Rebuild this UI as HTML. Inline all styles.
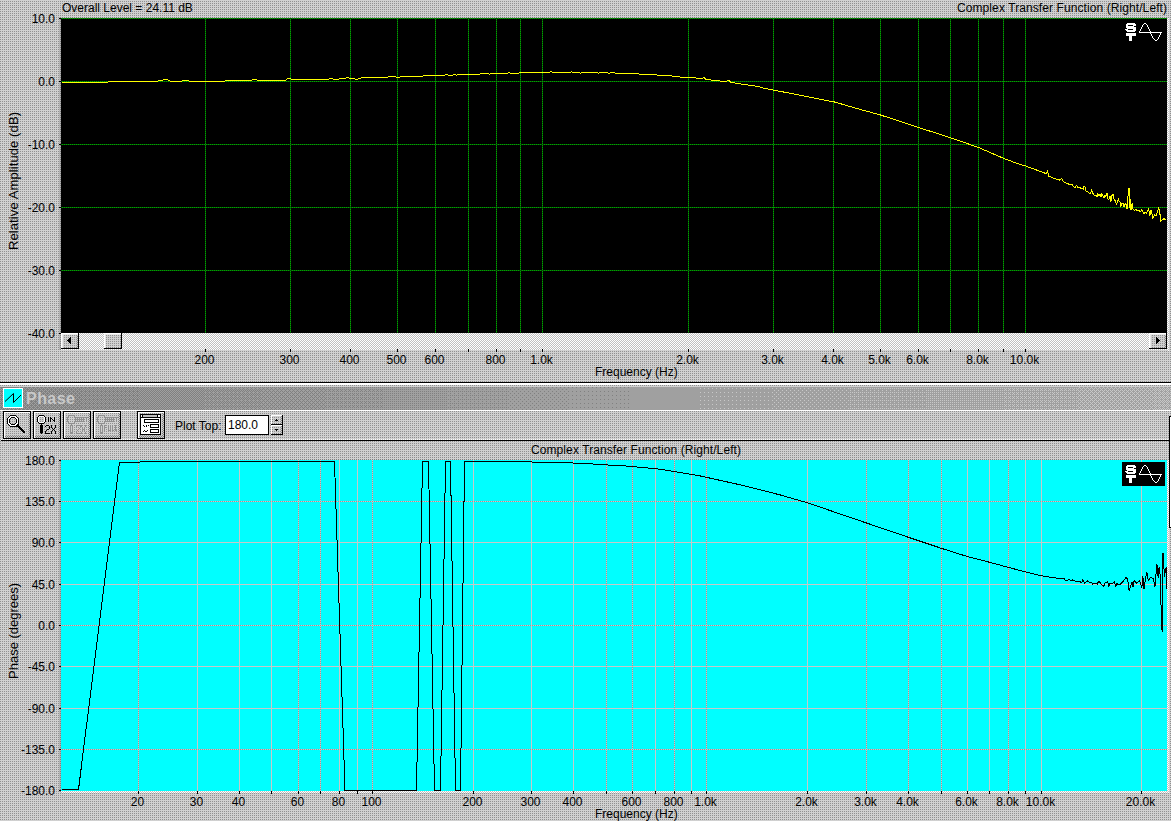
<!DOCTYPE html>
<html><head><meta charset="utf-8"><style>
html,body{margin:0;padding:0;width:1171px;height:821px;overflow:hidden;background:#d0d0d0;}
svg{display:block;}
text{font-family:"Liberation Sans",sans-serif;font-size:12px;fill:#000;}
</style></head><body>
<svg width="1171" height="821" viewBox="0 0 1171 821" shape-rendering="crispEdges">
<defs>
<pattern id="bg" patternUnits="userSpaceOnUse" width="2" height="2"><rect width="2" height="2" fill="#d0d0d0"/><rect x="0" y="1" width="1" height="1" fill="#909090"/></pattern>
<pattern id="chk" patternUnits="userSpaceOnUse" width="2" height="2"><rect width="2" height="2" fill="#ffffff"/><rect x="1" y="0" width="1" height="1" fill="#c0c0c0"/><rect x="0" y="1" width="1" height="1" fill="#c0c0c0"/></pattern>
<pattern id="strip" patternUnits="userSpaceOnUse" width="2" height="2"><rect width="2" height="2" fill="#b4b4b4"/><rect x="0" y="1" width="1" height="1" fill="#808080"/></pattern>
<pattern id="dk" patternUnits="userSpaceOnUse" width="2" height="2"><rect width="2" height="2" fill="#d0d0d0"/><rect x="0" y="1" width="1" height="1" fill="#808080"/><rect x="1" y="0" width="1" height="1" fill="#808080"/></pattern>
<linearGradient id="tg" x1="0" y1="0" x2="1" y2="0"><stop offset="0" stop-color="#8a8a8a"/><stop offset="1" stop-color="#b1b1b1"/></linearGradient>
</defs>
<rect width="1171" height="821" fill="url(#bg)"/>

<rect x="59" y="17" width="1108" height="1" fill="url(#dk)"/>
<rect x="59" y="17" width="2" height="333" fill="url(#strip)"/>
<rect x="1167" y="18" width="2" height="333" fill="url(#chk)"/>
<rect x="61" y="18" width="1106" height="315" fill="#000"/>
<rect x="61" y="18" width="1106" height="1" fill="#005800"/>
<line x1="61" y1="18.5" x2="1167" y2="18.5" stroke="#00a000" stroke-width="1" stroke-dasharray="1 1" stroke-dashoffset="1"/>
<rect x="61" y="81" width="1106" height="1" fill="#005800"/>
<line x1="61" y1="81.5" x2="1167" y2="81.5" stroke="#00a000" stroke-width="1" stroke-dasharray="1 1" stroke-dashoffset="1"/>
<rect x="61" y="144" width="1106" height="1" fill="#005800"/>
<line x1="61" y1="144.5" x2="1167" y2="144.5" stroke="#00a000" stroke-width="1" stroke-dasharray="1 1" stroke-dashoffset="1"/>
<rect x="61" y="207" width="1106" height="1" fill="#005800"/>
<line x1="61" y1="207.5" x2="1167" y2="207.5" stroke="#00a000" stroke-width="1" stroke-dasharray="1 1" stroke-dashoffset="1"/>
<rect x="61" y="270" width="1106" height="1" fill="#005800"/>
<line x1="61" y1="270.5" x2="1167" y2="270.5" stroke="#00a000" stroke-width="1" stroke-dasharray="1 1" stroke-dashoffset="1"/>
<rect x="205" y="18" width="1" height="315" fill="#005800"/>
<line x1="205.5" y1="18" x2="205.5" y2="333" stroke="#00a000" stroke-width="1" stroke-dasharray="1 1" stroke-dashoffset="1"/>
<rect x="290" y="18" width="1" height="315" fill="#005800"/>
<line x1="290.5" y1="18" x2="290.5" y2="333" stroke="#00a000" stroke-width="1" stroke-dasharray="1 1" stroke-dashoffset="1"/>
<rect x="350" y="18" width="1" height="315" fill="#005800"/>
<line x1="350.5" y1="18" x2="350.5" y2="333" stroke="#00a000" stroke-width="1" stroke-dasharray="1 1" stroke-dashoffset="1"/>
<rect x="397" y="18" width="1" height="315" fill="#005800"/>
<line x1="397.5" y1="18" x2="397.5" y2="333" stroke="#00a000" stroke-width="1" stroke-dasharray="1 1" stroke-dashoffset="1"/>
<rect x="435" y="18" width="1" height="315" fill="#005800"/>
<line x1="435.5" y1="18" x2="435.5" y2="333" stroke="#00a000" stroke-width="1" stroke-dasharray="1 1" stroke-dashoffset="1"/>
<rect x="468" y="18" width="1" height="315" fill="#005800"/>
<line x1="468.5" y1="18" x2="468.5" y2="333" stroke="#00a000" stroke-width="1" stroke-dasharray="1 1" stroke-dashoffset="1"/>
<rect x="496" y="18" width="1" height="315" fill="#005800"/>
<line x1="496.5" y1="18" x2="496.5" y2="333" stroke="#00a000" stroke-width="1" stroke-dasharray="1 1" stroke-dashoffset="1"/>
<rect x="520" y="18" width="1" height="315" fill="#005800"/>
<line x1="520.5" y1="18" x2="520.5" y2="333" stroke="#00a000" stroke-width="1" stroke-dasharray="1 1" stroke-dashoffset="1"/>
<rect x="542" y="18" width="1" height="315" fill="#005800"/>
<line x1="542.5" y1="18" x2="542.5" y2="333" stroke="#00a000" stroke-width="1" stroke-dasharray="1 1" stroke-dashoffset="1"/>
<rect x="688" y="18" width="1" height="315" fill="#005800"/>
<line x1="688.5" y1="18" x2="688.5" y2="333" stroke="#00a000" stroke-width="1" stroke-dasharray="1 1" stroke-dashoffset="1"/>
<rect x="773" y="18" width="1" height="315" fill="#005800"/>
<line x1="773.5" y1="18" x2="773.5" y2="333" stroke="#00a000" stroke-width="1" stroke-dasharray="1 1" stroke-dashoffset="1"/>
<rect x="833" y="18" width="1" height="315" fill="#005800"/>
<line x1="833.5" y1="18" x2="833.5" y2="333" stroke="#00a000" stroke-width="1" stroke-dasharray="1 1" stroke-dashoffset="1"/>
<rect x="880" y="18" width="1" height="315" fill="#005800"/>
<line x1="880.5" y1="18" x2="880.5" y2="333" stroke="#00a000" stroke-width="1" stroke-dasharray="1 1" stroke-dashoffset="1"/>
<rect x="918" y="18" width="1" height="315" fill="#005800"/>
<line x1="918.5" y1="18" x2="918.5" y2="333" stroke="#00a000" stroke-width="1" stroke-dasharray="1 1" stroke-dashoffset="1"/>
<rect x="950" y="18" width="1" height="315" fill="#005800"/>
<line x1="950.5" y1="18" x2="950.5" y2="333" stroke="#00a000" stroke-width="1" stroke-dasharray="1 1" stroke-dashoffset="1"/>
<rect x="978" y="18" width="1" height="315" fill="#005800"/>
<line x1="978.5" y1="18" x2="978.5" y2="333" stroke="#00a000" stroke-width="1" stroke-dasharray="1 1" stroke-dashoffset="1"/>
<rect x="1003" y="18" width="1" height="315" fill="#005800"/>
<line x1="1003.5" y1="18" x2="1003.5" y2="333" stroke="#00a000" stroke-width="1" stroke-dasharray="1 1" stroke-dashoffset="1"/>
<rect x="1025" y="18" width="1" height="315" fill="#005800"/>
<line x1="1025.5" y1="18" x2="1025.5" y2="333" stroke="#00a000" stroke-width="1" stroke-dasharray="1 1" stroke-dashoffset="1"/>
<rect x="59" y="18" width="2" height="1" fill="#000"/>
<text x="55" y="23" text-anchor="end">10.0</text>
<rect x="59" y="81" width="2" height="1" fill="#000"/>
<text x="55" y="86" text-anchor="end">0.0</text>
<rect x="59" y="144" width="2" height="1" fill="#000"/>
<text x="55" y="149" text-anchor="end">-10.0</text>
<rect x="59" y="207" width="2" height="1" fill="#000"/>
<text x="55" y="212" text-anchor="end">-20.0</text>
<rect x="59" y="270" width="2" height="1" fill="#000"/>
<text x="55" y="275" text-anchor="end">-30.0</text>
<rect x="59" y="333" width="2" height="1" fill="#000"/>
<text x="55" y="338" text-anchor="end">-40.0</text>
<polyline fill="none" stroke="#ffff00" stroke-width="1" shape-rendering="crispEdges" points="61.50,82.50 107.50,82.50 108.50,81.50 157.50,81.50 158.50,80.50 162.50,80.50 163.50,79.50 167.50,79.50 168.50,80.50 169.50,80.50 170.50,81.50 181.50,81.50 182.50,80.50 188.50,80.50 189.50,81.50 224.50,81.50 225.50,80.50 251.50,80.50 252.50,79.50 256.50,79.50 257.50,80.50 285.50,80.50 286.50,79.50 286.50,79.50 287.50,78.50 290.50,78.50 291.50,79.50 328.50,79.50 329.50,78.50 332.50,78.50 333.50,79.50 338.50,79.50 339.50,78.50 345.50,78.50 346.50,77.50 348.50,77.50 349.50,78.50 354.50,78.50 355.50,79.50 357.50,79.50 358.50,78.50 360.50,78.50 361.50,77.50 387.50,77.50 388.50,76.50 395.50,76.50 396.50,77.50 399.50,77.50 400.50,76.50 422.50,76.50 423.50,75.50 444.50,75.50 445.50,74.50 447.50,74.50 448.50,75.50 452.50,75.50 453.50,74.50 455.50,74.50 456.50,75.50 456.50,75.50 457.50,74.50 479.50,74.50 480.50,73.50 488.50,73.50 489.50,74.50 489.50,74.50 490.50,73.50 507.50,73.50 508.50,72.50 509.50,72.50 510.50,73.50 518.50,73.50 519.50,72.50 549.50,72.50 550.50,71.50 551.50,71.50 552.50,72.50 570.50,72.50 571.50,71.50 571.50,71.50 572.50,72.50 579.50,72.50 580.50,73.50 580.50,73.50 581.50,72.50 597.50,72.50 598.50,73.50 598.50,73.50 599.50,72.50 607.50,72.50 608.50,73.50 609.50,73.50 610.50,72.50 614.50,72.50 615.50,73.50 638.50,73.50 639.50,74.50 656.50,74.50 657.50,75.50 671.50,75.50 672.50,76.50 679.50,76.50 680.50,77.50 682.50,77.50 683.50,77.50 695.50,77.50 696.50,78.50 702.50,78.50 703.50,77.50 704.50,77.50 705.50,79.50 710.50,79.50 711.50,80.50 719.50,80.50 720.50,81.50 726.50,81.50 727.50,80.50 729.50,80.50 730.50,82.50 734.50,82.50 735.50,83.50 740.50,83.50 741.50,84.50 747.50,84.50 748.50,85.50 754.50,85.50 755.50,86.50 759.50,86.50 760.50,87.50 834.50,102.00 860.50,109.50 880.50,115.00 918.50,127.50 950.50,137.70 978.50,147.50 1004.00,158.50 1020.50,164.70 1025.70,166.00 1046.30,173.70 1047.50,171.10 1048.90,176.30 1059.20,180.20 1061.80,178.20 1063.10,181.50 1070.50,184.90 1072.20,184.90 1074.80,187.90 1076.10,185.80 1076.90,186.00 1077.80,187.90 1080.30,187.90 1081.00,189.20 1082.00,187.70 1083.10,189.20 1083.70,186.80 1085.00,186.80 1085.70,190.50 1086.30,191.70 1088.00,191.70 1089.90,194.10 1091.00,192.20 1091.80,190.00 1092.70,193.20 1094.40,195.60 1096.50,195.80 1097.00,197.30 1097.80,193.90 1098.90,196.00 1100.00,193.90 1101.00,197.30 1101.90,193.90 1104.00,198.10 1104.90,195.20 1105.90,196.40 1107.00,192.80 1108.10,199.00 1108.90,199.80 1110.00,195.80 1110.90,202.00 1111.90,195.60 1113.00,193.90 1114.10,199.80 1114.90,200.30 1116.60,204.10 1117.70,201.10 1118.50,197.60 1119.00,201.00 1120.00,202.00 1120.90,206.10 1121.90,203.00 1123.10,203.00 1124.10,206.90 1125.10,203.70 1126.10,204.40 1127.00,209.10 1128.00,195.70 1129.00,187.60 1129.20,198.10 1130.20,209.80 1130.20,198.60 1131.20,209.80 1132.10,203.00 1133.10,209.10 1134.60,210.30 1136.00,208.80 1137.00,210.80 1139.00,210.30 1139.90,212.00 1141.90,209.80 1143.60,213.40 1145.30,212.70 1146.30,213.40 1148.70,208.80 1149.90,216.10 1150.90,209.80 1152.90,218.10 1154.60,214.70 1156.00,215.90 1157.50,211.70 1158.70,206.90 1159.90,213.70 1160.90,221.00 1162.40,219.50 1164.10,218.80 1165.30,220.00 1166.50,219.50"/>
<rect x="1127" y="23" width="8" height="1" fill="#fff"/><rect x="1126" y="24" width="10" height="1" fill="#fff"/><rect x="1126" y="25" width="2" height="1" fill="#fff"/><rect x="1133" y="25" width="3" height="1" fill="#fff"/><rect x="1126" y="26" width="8" height="1" fill="#fff"/><rect x="1126" y="27" width="10" height="1" fill="#fff"/><rect x="1127" y="28" width="9" height="1" fill="#fff"/><rect x="1125" y="29" width="3" height="1" fill="#fff"/><rect x="1133" y="29" width="3" height="1" fill="#fff"/><rect x="1126" y="30" width="10" height="1" fill="#fff"/><rect x="1127" y="31" width="8" height="1" fill="#fff"/><rect x="1126" y="33" width="10" height="1" fill="#fff"/><rect x="1126" y="34" width="10" height="1" fill="#fff"/><rect x="1126" y="35" width="10" height="1" fill="#fff"/><rect x="1129" y="36" width="3" height="1" fill="#fff"/><rect x="1129" y="37" width="3" height="1" fill="#fff"/><rect x="1129" y="38" width="3" height="1" fill="#fff"/><rect x="1129" y="39" width="3" height="1" fill="#fff"/><rect x="1129" y="40" width="3" height="1" fill="#fff"/><rect x="1144" y="23" width="2" height="1" fill="#fff"/><rect x="1143" y="24" width="1" height="1" fill="#fff"/><rect x="1146" y="24" width="1" height="1" fill="#fff"/><rect x="1142" y="25" width="1" height="1" fill="#fff"/><rect x="1147" y="25" width="1" height="1" fill="#fff"/><rect x="1142" y="26" width="1" height="1" fill="#fff"/><rect x="1147" y="26" width="1" height="1" fill="#fff"/><rect x="1141" y="27" width="1" height="1" fill="#fff"/><rect x="1148" y="27" width="1" height="1" fill="#fff"/><rect x="1141" y="28" width="1" height="1" fill="#fff"/><rect x="1148" y="28" width="1" height="1" fill="#fff"/><rect x="1140" y="29" width="1" height="1" fill="#fff"/><rect x="1149" y="29" width="1" height="1" fill="#fff"/><rect x="1140" y="30" width="1" height="1" fill="#fff"/><rect x="1149" y="30" width="1" height="1" fill="#fff"/><rect x="1139" y="31" width="1" height="1" fill="#fff"/><rect x="1150" y="31" width="1" height="1" fill="#fff"/><rect x="1139" y="32" width="23" height="1" fill="#fff"/><rect x="1150" y="33" width="1" height="1" fill="#fff"/><rect x="1160" y="33" width="1" height="1" fill="#fff"/><rect x="1151" y="34" width="1" height="1" fill="#fff"/><rect x="1160" y="34" width="1" height="1" fill="#fff"/><rect x="1151" y="35" width="1" height="1" fill="#fff"/><rect x="1159" y="35" width="1" height="1" fill="#fff"/><rect x="1152" y="36" width="1" height="1" fill="#fff"/><rect x="1159" y="36" width="1" height="1" fill="#fff"/><rect x="1152" y="37" width="1" height="1" fill="#fff"/><rect x="1158" y="37" width="1" height="1" fill="#fff"/><rect x="1153" y="38" width="1" height="1" fill="#fff"/><rect x="1158" y="38" width="1" height="1" fill="#fff"/><rect x="1154" y="39" width="1" height="1" fill="#fff"/><rect x="1157" y="39" width="1" height="1" fill="#fff"/><rect x="1155" y="40" width="2" height="1" fill="#fff"/>
<rect x="61" y="333" width="1106" height="17" fill="url(#chk)"/>
<rect x="61" y="333" width="18" height="16" fill="#000"/><rect x="61" y="333" width="17" height="15" fill="#fff"/><rect x="62" y="334" width="16" height="14" fill="#e8e8e8"/><rect x="63" y="335" width="15" height="13" fill="url(#dk)"/><rect x="63" y="335" width="14" height="12" fill="url(#bg)"/>
<rect x="70" y="337" width="1" height="1" fill="#000"/><rect x="69" y="338" width="2" height="1" fill="#000"/><rect x="68" y="339" width="3" height="1" fill="#000"/><rect x="67" y="340" width="4" height="1" fill="#000"/><rect x="68" y="341" width="3" height="1" fill="#000"/><rect x="69" y="342" width="2" height="1" fill="#000"/><rect x="70" y="343" width="1" height="1" fill="#000"/>
<rect x="104" y="333" width="18" height="16" fill="#000"/><rect x="104" y="333" width="17" height="15" fill="#fff"/><rect x="105" y="334" width="16" height="14" fill="#e8e8e8"/><rect x="106" y="335" width="15" height="13" fill="url(#dk)"/><rect x="106" y="335" width="14" height="12" fill="url(#bg)"/>
<rect x="1149" y="333" width="18" height="16" fill="#000"/><rect x="1149" y="333" width="17" height="15" fill="#fff"/><rect x="1150" y="334" width="16" height="14" fill="#e8e8e8"/><rect x="1151" y="335" width="15" height="13" fill="url(#dk)"/><rect x="1151" y="335" width="14" height="12" fill="url(#bg)"/>
<rect x="1156" y="337" width="1" height="1" fill="#000"/><rect x="1156" y="338" width="2" height="1" fill="#000"/><rect x="1156" y="339" width="3" height="1" fill="#000"/><rect x="1156" y="340" width="4" height="1" fill="#000"/><rect x="1156" y="341" width="3" height="1" fill="#000"/><rect x="1156" y="342" width="2" height="1" fill="#000"/><rect x="1156" y="343" width="1" height="1" fill="#000"/>
<rect x="205" y="349" width="1" height="3" fill="#000"/>
<text x="204.5" y="364" text-anchor="middle">200</text>
<rect x="290" y="349" width="1" height="3" fill="#000"/>
<text x="289.5" y="364" text-anchor="middle">300</text>
<rect x="350" y="349" width="1" height="3" fill="#000"/>
<text x="349.5" y="364" text-anchor="middle">400</text>
<rect x="397" y="349" width="1" height="3" fill="#000"/>
<text x="396.5" y="364" text-anchor="middle">500</text>
<rect x="435" y="349" width="1" height="3" fill="#000"/>
<text x="434.5" y="364" text-anchor="middle">600</text>
<rect x="468" y="349" width="1" height="3" fill="#000"/>
<rect x="496" y="349" width="1" height="3" fill="#000"/>
<text x="495.5" y="364" text-anchor="middle">800</text>
<rect x="520" y="349" width="1" height="3" fill="#000"/>
<rect x="542" y="349" width="1" height="3" fill="#000"/>
<text x="541.5" y="364" text-anchor="middle">1.0k</text>
<rect x="688" y="349" width="1" height="3" fill="#000"/>
<text x="687.5" y="364" text-anchor="middle">2.0k</text>
<rect x="773" y="349" width="1" height="3" fill="#000"/>
<text x="772.5" y="364" text-anchor="middle">3.0k</text>
<rect x="833" y="349" width="1" height="3" fill="#000"/>
<text x="832.5" y="364" text-anchor="middle">4.0k</text>
<rect x="880" y="349" width="1" height="3" fill="#000"/>
<text x="879.5" y="364" text-anchor="middle">5.0k</text>
<rect x="918" y="349" width="1" height="3" fill="#000"/>
<text x="917.5" y="364" text-anchor="middle">6.0k</text>
<rect x="950" y="349" width="1" height="3" fill="#000"/>
<rect x="978" y="349" width="1" height="3" fill="#000"/>
<text x="977.5" y="364" text-anchor="middle">8.0k</text>
<rect x="1003" y="349" width="1" height="3" fill="#000"/>
<rect x="1025" y="349" width="1" height="3" fill="#000"/>
<text x="1024.5" y="364" text-anchor="middle">10.0k</text>
<text x="595" y="376">Frequency (Hz)</text>
<text x="62" y="12">Overall Level = 24.11 dB</text>
<text x="957" y="12" textLength="210" lengthAdjust="spacing">Complex Transfer Function (Right/Left)</text>
<text transform="translate(18,250) rotate(-90)" style="font-size:13px" textLength="138" lengthAdjust="spacing">Relative Amplitude (dB)</text>
<rect x="0" y="382" width="1171" height="1" fill="#000"/>
<rect x="0" y="383" width="1171" height="2" fill="#fff"/>
<rect x="0" y="387" width="19" height="23" fill="url(#tp_lo_5)"/>
<rect x="19" y="387" width="61" height="23" fill="url(#tp_lo_6)"/>
<rect x="80" y="387" width="61" height="23" fill="url(#tp_lo_7)"/>
<rect x="141" y="387" width="61" height="23" fill="url(#tp_lo_8)"/>
<rect x="202" y="387" width="61" height="23" fill="url(#tp_lo_9)"/>
<rect x="263" y="387" width="61" height="23" fill="url(#tp_lo_10)"/>
<rect x="324" y="387" width="61" height="23" fill="url(#tp_lo_11)"/>
<rect x="385" y="387" width="61" height="23" fill="url(#tp_lo_12)"/>
<rect x="446" y="387" width="61" height="23" fill="url(#tp_lo_13)"/>
<rect x="507" y="387" width="61" height="23" fill="url(#tp_lo_14)"/>
<rect x="568" y="387" width="61" height="23" fill="url(#tp_lo_15)"/>
<rect x="629" y="387" width="30" height="23" fill="url(#tp_lo_16)"/>
<rect x="659" y="387" width="38" height="23" fill="url(#tp_hi_0)"/>
<rect x="697" y="387" width="76" height="23" fill="url(#tp_hi_1)"/>
<rect x="773" y="387" width="77" height="23" fill="url(#tp_hi_2)"/>
<rect x="850" y="387" width="76" height="23" fill="url(#tp_hi_3)"/>
<rect x="926" y="387" width="76" height="23" fill="url(#tp_hi_4)"/>
<rect x="1002" y="387" width="76" height="23" fill="url(#tp_hi_5)"/>
<rect x="1078" y="387" width="76" height="23" fill="url(#tp_hi_6)"/>
<rect x="1154" y="387" width="17" height="23" fill="url(#tp_hi_7)"/>
<defs><pattern id="tp_lo_5" patternUnits="userSpaceOnUse" width="4" height="4"><rect width="4" height="4" fill="#808080"/><rect x="0" y="0" width="1" height="1" fill="#a0a0a0"/><rect x="2" y="0" width="1" height="1" fill="#a0a0a0"/><rect x="1" y="1" width="1" height="1" fill="#a0a0a0"/><rect x="0" y="2" width="1" height="1" fill="#a0a0a0"/><rect x="2" y="2" width="1" height="1" fill="#a0a0a0"/></pattern><pattern id="tp_lo_6" patternUnits="userSpaceOnUse" width="4" height="4"><rect width="4" height="4" fill="#808080"/><rect x="0" y="0" width="1" height="1" fill="#a0a0a0"/><rect x="2" y="0" width="1" height="1" fill="#a0a0a0"/><rect x="1" y="1" width="1" height="1" fill="#a0a0a0"/><rect x="0" y="2" width="1" height="1" fill="#a0a0a0"/><rect x="2" y="2" width="1" height="1" fill="#a0a0a0"/><rect x="3" y="3" width="1" height="1" fill="#a0a0a0"/></pattern><pattern id="tp_lo_7" patternUnits="userSpaceOnUse" width="4" height="4"><rect width="4" height="4" fill="#808080"/><rect x="0" y="0" width="1" height="1" fill="#a0a0a0"/><rect x="2" y="0" width="1" height="1" fill="#a0a0a0"/><rect x="1" y="1" width="1" height="1" fill="#a0a0a0"/><rect x="3" y="1" width="1" height="1" fill="#a0a0a0"/><rect x="0" y="2" width="1" height="1" fill="#a0a0a0"/><rect x="2" y="2" width="1" height="1" fill="#a0a0a0"/><rect x="3" y="3" width="1" height="1" fill="#a0a0a0"/></pattern><pattern id="tp_lo_8" patternUnits="userSpaceOnUse" width="4" height="4"><rect width="4" height="4" fill="#808080"/><rect x="0" y="0" width="1" height="1" fill="#a0a0a0"/><rect x="2" y="0" width="1" height="1" fill="#a0a0a0"/><rect x="1" y="1" width="1" height="1" fill="#a0a0a0"/><rect x="3" y="1" width="1" height="1" fill="#a0a0a0"/><rect x="0" y="2" width="1" height="1" fill="#a0a0a0"/><rect x="2" y="2" width="1" height="1" fill="#a0a0a0"/><rect x="1" y="3" width="1" height="1" fill="#a0a0a0"/><rect x="3" y="3" width="1" height="1" fill="#a0a0a0"/></pattern><pattern id="tp_lo_9" patternUnits="userSpaceOnUse" width="4" height="4"><rect width="4" height="4" fill="#808080"/><rect x="0" y="0" width="1" height="1" fill="#a0a0a0"/><rect x="1" y="0" width="1" height="1" fill="#a0a0a0"/><rect x="2" y="0" width="1" height="1" fill="#a0a0a0"/><rect x="1" y="1" width="1" height="1" fill="#a0a0a0"/><rect x="3" y="1" width="1" height="1" fill="#a0a0a0"/><rect x="0" y="2" width="1" height="1" fill="#a0a0a0"/><rect x="2" y="2" width="1" height="1" fill="#a0a0a0"/><rect x="1" y="3" width="1" height="1" fill="#a0a0a0"/><rect x="3" y="3" width="1" height="1" fill="#a0a0a0"/></pattern><pattern id="tp_lo_10" patternUnits="userSpaceOnUse" width="4" height="4"><rect width="4" height="4" fill="#808080"/><rect x="0" y="0" width="1" height="1" fill="#a0a0a0"/><rect x="1" y="0" width="1" height="1" fill="#a0a0a0"/><rect x="2" y="0" width="1" height="1" fill="#a0a0a0"/><rect x="1" y="1" width="1" height="1" fill="#a0a0a0"/><rect x="3" y="1" width="1" height="1" fill="#a0a0a0"/><rect x="0" y="2" width="1" height="1" fill="#a0a0a0"/><rect x="2" y="2" width="1" height="1" fill="#a0a0a0"/><rect x="3" y="2" width="1" height="1" fill="#a0a0a0"/><rect x="1" y="3" width="1" height="1" fill="#a0a0a0"/><rect x="3" y="3" width="1" height="1" fill="#a0a0a0"/></pattern><pattern id="tp_lo_11" patternUnits="userSpaceOnUse" width="4" height="4"><rect width="4" height="4" fill="#808080"/><rect x="0" y="0" width="1" height="1" fill="#a0a0a0"/><rect x="1" y="0" width="1" height="1" fill="#a0a0a0"/><rect x="2" y="0" width="1" height="1" fill="#a0a0a0"/><rect x="3" y="0" width="1" height="1" fill="#a0a0a0"/><rect x="1" y="1" width="1" height="1" fill="#a0a0a0"/><rect x="3" y="1" width="1" height="1" fill="#a0a0a0"/><rect x="0" y="2" width="1" height="1" fill="#a0a0a0"/><rect x="2" y="2" width="1" height="1" fill="#a0a0a0"/><rect x="3" y="2" width="1" height="1" fill="#a0a0a0"/><rect x="1" y="3" width="1" height="1" fill="#a0a0a0"/><rect x="3" y="3" width="1" height="1" fill="#a0a0a0"/></pattern><pattern id="tp_lo_12" patternUnits="userSpaceOnUse" width="4" height="4"><rect width="4" height="4" fill="#808080"/><rect x="0" y="0" width="1" height="1" fill="#a0a0a0"/><rect x="1" y="0" width="1" height="1" fill="#a0a0a0"/><rect x="2" y="0" width="1" height="1" fill="#a0a0a0"/><rect x="3" y="0" width="1" height="1" fill="#a0a0a0"/><rect x="1" y="1" width="1" height="1" fill="#a0a0a0"/><rect x="3" y="1" width="1" height="1" fill="#a0a0a0"/><rect x="0" y="2" width="1" height="1" fill="#a0a0a0"/><rect x="1" y="2" width="1" height="1" fill="#a0a0a0"/><rect x="2" y="2" width="1" height="1" fill="#a0a0a0"/><rect x="3" y="2" width="1" height="1" fill="#a0a0a0"/><rect x="1" y="3" width="1" height="1" fill="#a0a0a0"/><rect x="3" y="3" width="1" height="1" fill="#a0a0a0"/></pattern><pattern id="tp_lo_13" patternUnits="userSpaceOnUse" width="4" height="4"><rect width="4" height="4" fill="#808080"/><rect x="0" y="0" width="1" height="1" fill="#a0a0a0"/><rect x="1" y="0" width="1" height="1" fill="#a0a0a0"/><rect x="2" y="0" width="1" height="1" fill="#a0a0a0"/><rect x="3" y="0" width="1" height="1" fill="#a0a0a0"/><rect x="0" y="1" width="1" height="1" fill="#a0a0a0"/><rect x="1" y="1" width="1" height="1" fill="#a0a0a0"/><rect x="3" y="1" width="1" height="1" fill="#a0a0a0"/><rect x="0" y="2" width="1" height="1" fill="#a0a0a0"/><rect x="1" y="2" width="1" height="1" fill="#a0a0a0"/><rect x="2" y="2" width="1" height="1" fill="#a0a0a0"/><rect x="3" y="2" width="1" height="1" fill="#a0a0a0"/><rect x="1" y="3" width="1" height="1" fill="#a0a0a0"/><rect x="3" y="3" width="1" height="1" fill="#a0a0a0"/></pattern><pattern id="tp_lo_14" patternUnits="userSpaceOnUse" width="4" height="4"><rect width="4" height="4" fill="#808080"/><rect x="0" y="0" width="1" height="1" fill="#a0a0a0"/><rect x="1" y="0" width="1" height="1" fill="#a0a0a0"/><rect x="2" y="0" width="1" height="1" fill="#a0a0a0"/><rect x="3" y="0" width="1" height="1" fill="#a0a0a0"/><rect x="0" y="1" width="1" height="1" fill="#a0a0a0"/><rect x="1" y="1" width="1" height="1" fill="#a0a0a0"/><rect x="3" y="1" width="1" height="1" fill="#a0a0a0"/><rect x="0" y="2" width="1" height="1" fill="#a0a0a0"/><rect x="1" y="2" width="1" height="1" fill="#a0a0a0"/><rect x="2" y="2" width="1" height="1" fill="#a0a0a0"/><rect x="3" y="2" width="1" height="1" fill="#a0a0a0"/><rect x="1" y="3" width="1" height="1" fill="#a0a0a0"/><rect x="2" y="3" width="1" height="1" fill="#a0a0a0"/><rect x="3" y="3" width="1" height="1" fill="#a0a0a0"/></pattern><pattern id="tp_lo_15" patternUnits="userSpaceOnUse" width="4" height="4"><rect width="4" height="4" fill="#808080"/><rect x="0" y="0" width="1" height="1" fill="#a0a0a0"/><rect x="1" y="0" width="1" height="1" fill="#a0a0a0"/><rect x="2" y="0" width="1" height="1" fill="#a0a0a0"/><rect x="3" y="0" width="1" height="1" fill="#a0a0a0"/><rect x="0" y="1" width="1" height="1" fill="#a0a0a0"/><rect x="1" y="1" width="1" height="1" fill="#a0a0a0"/><rect x="2" y="1" width="1" height="1" fill="#a0a0a0"/><rect x="3" y="1" width="1" height="1" fill="#a0a0a0"/><rect x="0" y="2" width="1" height="1" fill="#a0a0a0"/><rect x="1" y="2" width="1" height="1" fill="#a0a0a0"/><rect x="2" y="2" width="1" height="1" fill="#a0a0a0"/><rect x="3" y="2" width="1" height="1" fill="#a0a0a0"/><rect x="1" y="3" width="1" height="1" fill="#a0a0a0"/><rect x="2" y="3" width="1" height="1" fill="#a0a0a0"/><rect x="3" y="3" width="1" height="1" fill="#a0a0a0"/></pattern><pattern id="tp_lo_16" patternUnits="userSpaceOnUse" width="4" height="4"><rect width="4" height="4" fill="#808080"/><rect x="0" y="0" width="1" height="1" fill="#a0a0a0"/><rect x="1" y="0" width="1" height="1" fill="#a0a0a0"/><rect x="2" y="0" width="1" height="1" fill="#a0a0a0"/><rect x="3" y="0" width="1" height="1" fill="#a0a0a0"/><rect x="0" y="1" width="1" height="1" fill="#a0a0a0"/><rect x="1" y="1" width="1" height="1" fill="#a0a0a0"/><rect x="2" y="1" width="1" height="1" fill="#a0a0a0"/><rect x="3" y="1" width="1" height="1" fill="#a0a0a0"/><rect x="0" y="2" width="1" height="1" fill="#a0a0a0"/><rect x="1" y="2" width="1" height="1" fill="#a0a0a0"/><rect x="2" y="2" width="1" height="1" fill="#a0a0a0"/><rect x="3" y="2" width="1" height="1" fill="#a0a0a0"/><rect x="0" y="3" width="1" height="1" fill="#a0a0a0"/><rect x="1" y="3" width="1" height="1" fill="#a0a0a0"/><rect x="2" y="3" width="1" height="1" fill="#a0a0a0"/><rect x="3" y="3" width="1" height="1" fill="#a0a0a0"/></pattern><pattern id="tp_hi_0" patternUnits="userSpaceOnUse" width="4" height="4"><rect width="4" height="4" fill="#a0a0a0"/></pattern><pattern id="tp_hi_1" patternUnits="userSpaceOnUse" width="4" height="4"><rect width="4" height="4" fill="#a0a0a0"/><rect x="0" y="0" width="1" height="1" fill="#c8c8c8"/></pattern><pattern id="tp_hi_2" patternUnits="userSpaceOnUse" width="4" height="4"><rect width="4" height="4" fill="#a0a0a0"/><rect x="0" y="0" width="1" height="1" fill="#c8c8c8"/><rect x="2" y="2" width="1" height="1" fill="#c8c8c8"/></pattern><pattern id="tp_hi_3" patternUnits="userSpaceOnUse" width="4" height="4"><rect width="4" height="4" fill="#a0a0a0"/><rect x="0" y="0" width="1" height="1" fill="#c8c8c8"/><rect x="2" y="0" width="1" height="1" fill="#c8c8c8"/><rect x="2" y="2" width="1" height="1" fill="#c8c8c8"/></pattern><pattern id="tp_hi_4" patternUnits="userSpaceOnUse" width="4" height="4"><rect width="4" height="4" fill="#a0a0a0"/><rect x="0" y="0" width="1" height="1" fill="#c8c8c8"/><rect x="2" y="0" width="1" height="1" fill="#c8c8c8"/><rect x="0" y="2" width="1" height="1" fill="#c8c8c8"/><rect x="2" y="2" width="1" height="1" fill="#c8c8c8"/></pattern><pattern id="tp_hi_5" patternUnits="userSpaceOnUse" width="4" height="4"><rect width="4" height="4" fill="#a0a0a0"/><rect x="0" y="0" width="1" height="1" fill="#c8c8c8"/><rect x="2" y="0" width="1" height="1" fill="#c8c8c8"/><rect x="1" y="1" width="1" height="1" fill="#c8c8c8"/><rect x="0" y="2" width="1" height="1" fill="#c8c8c8"/><rect x="2" y="2" width="1" height="1" fill="#c8c8c8"/></pattern><pattern id="tp_hi_6" patternUnits="userSpaceOnUse" width="4" height="4"><rect width="4" height="4" fill="#a0a0a0"/><rect x="0" y="0" width="1" height="1" fill="#c8c8c8"/><rect x="2" y="0" width="1" height="1" fill="#c8c8c8"/><rect x="1" y="1" width="1" height="1" fill="#c8c8c8"/><rect x="0" y="2" width="1" height="1" fill="#c8c8c8"/><rect x="2" y="2" width="1" height="1" fill="#c8c8c8"/><rect x="3" y="3" width="1" height="1" fill="#c8c8c8"/></pattern><pattern id="tp_hi_7" patternUnits="userSpaceOnUse" width="4" height="4"><rect width="4" height="4" fill="#a0a0a0"/><rect x="0" y="0" width="1" height="1" fill="#c8c8c8"/><rect x="2" y="0" width="1" height="1" fill="#c8c8c8"/><rect x="1" y="1" width="1" height="1" fill="#c8c8c8"/><rect x="3" y="1" width="1" height="1" fill="#c8c8c8"/><rect x="0" y="2" width="1" height="1" fill="#c8c8c8"/><rect x="2" y="2" width="1" height="1" fill="#c8c8c8"/><rect x="3" y="3" width="1" height="1" fill="#c8c8c8"/></pattern></defs>
<rect x="0" y="410" width="1171" height="1" fill="#fff"/>
<rect x="3" y="388" width="20" height="20" fill="#fff"/><rect x="4" y="389" width="18" height="18" fill="#00ffff"/>
<polyline fill="none" stroke="#000" stroke-width="1" shape-rendering="auto" points="5,401.5 13.5,393.5 13.5,402.5 21,395"/>
<text x="26" y="404" style="font-size:16px;font-weight:bold;fill:#c8c8c8" textLength="49" lengthAdjust="spacing">Phase</text>
<rect x="3" y="411" width="28" height="28" fill="#000"/><rect x="4" y="412" width="26" height="26" fill="#fff"/><rect x="5" y="413" width="25" height="25" fill="url(#dk)"/><rect x="5" y="413" width="23" height="23" fill="url(#bg)"/>
<rect x="33" y="411" width="28" height="28" fill="#000"/><rect x="34" y="412" width="26" height="26" fill="#fff"/><rect x="35" y="413" width="25" height="25" fill="url(#dk)"/><rect x="35" y="413" width="23" height="23" fill="url(#bg)"/>
<rect x="63" y="411" width="28" height="28" fill="#000"/><rect x="64" y="412" width="26" height="26" fill="#fff"/><rect x="65" y="413" width="25" height="25" fill="url(#dk)"/><rect x="65" y="413" width="23" height="23" fill="url(#bg)"/>
<rect x="93" y="411" width="28" height="28" fill="#000"/><rect x="94" y="412" width="26" height="26" fill="#fff"/><rect x="95" y="413" width="25" height="25" fill="url(#dk)"/><rect x="95" y="413" width="23" height="23" fill="url(#bg)"/>
<rect x="137" y="411" width="28" height="28" fill="#000"/><rect x="138" y="412" width="26" height="26" fill="#fff"/><rect x="139" y="413" width="25" height="25" fill="url(#dk)"/><rect x="139" y="413" width="23" height="23" fill="url(#bg)"/>
<rect x="10" y="415" width="6" height="1" fill="#000"/><rect x="9" y="416" width="1" height="1" fill="#000"/><rect x="10" y="416" width="6" height="1" fill="#fff"/><rect x="16" y="416" width="1" height="1" fill="#000"/><rect x="8" y="417" width="1" height="1" fill="#000"/><rect x="9" y="417" width="2" height="1" fill="#fff"/><rect x="11" y="417" width="4" height="1" fill="#000"/><rect x="15" y="417" width="2" height="1" fill="#fff"/><rect x="17" y="417" width="1" height="1" fill="#000"/><rect x="7" y="418" width="1" height="1" fill="#000"/><rect x="8" y="418" width="2" height="1" fill="#fff"/><rect x="10" y="418" width="1" height="1" fill="#000"/><rect x="15" y="418" width="1" height="1" fill="#000"/><rect x="16" y="418" width="2" height="1" fill="#fff"/><rect x="18" y="418" width="1" height="1" fill="#000"/><rect x="7" y="419" width="1" height="1" fill="#000"/><rect x="8" y="419" width="1" height="1" fill="#fff"/><rect x="9" y="419" width="1" height="1" fill="#000"/><rect x="16" y="419" width="1" height="1" fill="#000"/><rect x="17" y="419" width="1" height="1" fill="#fff"/><rect x="18" y="419" width="1" height="1" fill="#000"/><rect x="7" y="420" width="1" height="1" fill="#000"/><rect x="8" y="420" width="1" height="1" fill="#fff"/><rect x="9" y="420" width="1" height="1" fill="#000"/><rect x="16" y="420" width="1" height="1" fill="#000"/><rect x="17" y="420" width="1" height="1" fill="#fff"/><rect x="18" y="420" width="1" height="1" fill="#000"/><rect x="7" y="421" width="1" height="1" fill="#000"/><rect x="8" y="421" width="1" height="1" fill="#fff"/><rect x="9" y="421" width="1" height="1" fill="#000"/><rect x="16" y="421" width="1" height="1" fill="#000"/><rect x="17" y="421" width="1" height="1" fill="#fff"/><rect x="18" y="421" width="1" height="1" fill="#000"/><rect x="7" y="422" width="1" height="1" fill="#000"/><rect x="8" y="422" width="1" height="1" fill="#fff"/><rect x="9" y="422" width="1" height="1" fill="#000"/><rect x="16" y="422" width="1" height="1" fill="#000"/><rect x="17" y="422" width="1" height="1" fill="#fff"/><rect x="18" y="422" width="1" height="1" fill="#000"/><rect x="7" y="423" width="1" height="1" fill="#000"/><rect x="8" y="423" width="2" height="1" fill="#fff"/><rect x="10" y="423" width="1" height="1" fill="#000"/><rect x="15" y="423" width="1" height="1" fill="#000"/><rect x="16" y="423" width="2" height="1" fill="#fff"/><rect x="18" y="423" width="1" height="1" fill="#000"/><rect x="8" y="424" width="1" height="1" fill="#000"/><rect x="9" y="424" width="2" height="1" fill="#fff"/><rect x="11" y="424" width="4" height="1" fill="#000"/><rect x="15" y="424" width="2" height="1" fill="#fff"/><rect x="17" y="424" width="2" height="1" fill="#000"/><rect x="9" y="425" width="1" height="1" fill="#000"/><rect x="10" y="425" width="6" height="1" fill="#fff"/><rect x="16" y="425" width="3" height="1" fill="#000"/><rect x="10" y="426" width="10" height="1" fill="#000"/><rect x="18" y="427" width="3" height="1" fill="#000"/><rect x="19" y="428" width="3" height="1" fill="#000"/><rect x="20" y="429" width="3" height="1" fill="#000"/><rect x="21" y="430" width="3" height="1" fill="#000"/><rect x="22" y="431" width="3" height="1" fill="#000"/><rect x="23" y="432" width="2" height="1" fill="#000"/>
<rect x="39" y="415" width="5" height="1" fill="#000"/><rect x="38" y="416" width="1" height="1" fill="#000"/><rect x="39" y="416" width="5" height="1" fill="#fff"/><rect x="44" y="416" width="1" height="1" fill="#000"/><rect x="37" y="417" width="1" height="1" fill="#000"/><rect x="38" y="417" width="1" height="1" fill="#fff"/><rect x="44" y="417" width="1" height="1" fill="#fff"/><rect x="45" y="417" width="1" height="1" fill="#000"/><rect x="48" y="417" width="1" height="1" fill="#000"/><rect x="50" y="417" width="1" height="1" fill="#000"/><rect x="54" y="417" width="1" height="1" fill="#000"/><rect x="37" y="418" width="1" height="1" fill="#000"/><rect x="38" y="418" width="1" height="1" fill="#fff"/><rect x="44" y="418" width="1" height="1" fill="#fff"/><rect x="45" y="418" width="1" height="1" fill="#000"/><rect x="48" y="418" width="1" height="1" fill="#000"/><rect x="50" y="418" width="2" height="1" fill="#000"/><rect x="54" y="418" width="1" height="1" fill="#000"/><rect x="37" y="419" width="1" height="1" fill="#000"/><rect x="38" y="419" width="1" height="1" fill="#fff"/><rect x="44" y="419" width="1" height="1" fill="#fff"/><rect x="45" y="419" width="1" height="1" fill="#000"/><rect x="48" y="419" width="1" height="1" fill="#000"/><rect x="50" y="419" width="1" height="1" fill="#000"/><rect x="52" y="419" width="1" height="1" fill="#000"/><rect x="54" y="419" width="1" height="1" fill="#000"/><rect x="37" y="420" width="1" height="1" fill="#000"/><rect x="38" y="420" width="1" height="1" fill="#fff"/><rect x="44" y="420" width="1" height="1" fill="#fff"/><rect x="45" y="420" width="1" height="1" fill="#000"/><rect x="48" y="420" width="1" height="1" fill="#000"/><rect x="50" y="420" width="1" height="1" fill="#000"/><rect x="53" y="420" width="2" height="1" fill="#000"/><rect x="37" y="421" width="1" height="1" fill="#000"/><rect x="38" y="421" width="1" height="1" fill="#fff"/><rect x="44" y="421" width="1" height="1" fill="#fff"/><rect x="45" y="421" width="1" height="1" fill="#000"/><rect x="48" y="421" width="1" height="1" fill="#000"/><rect x="50" y="421" width="1" height="1" fill="#000"/><rect x="54" y="421" width="1" height="1" fill="#000"/><rect x="38" y="422" width="1" height="1" fill="#000"/><rect x="39" y="422" width="5" height="1" fill="#fff"/><rect x="44" y="422" width="1" height="1" fill="#000"/><rect x="39" y="423" width="5" height="1" fill="#000"/><rect x="41" y="424" width="1" height="1" fill="#000"/><rect x="40" y="425" width="3" height="1" fill="#000"/><rect x="46" y="425" width="3" height="1" fill="#000"/><rect x="51" y="425" width="1" height="1" fill="#000"/><rect x="55" y="425" width="1" height="1" fill="#000"/><rect x="40" y="426" width="3" height="1" fill="#000"/><rect x="45" y="426" width="1" height="1" fill="#000"/><rect x="49" y="426" width="1" height="1" fill="#000"/><rect x="51" y="426" width="1" height="1" fill="#000"/><rect x="55" y="426" width="1" height="1" fill="#000"/><rect x="40" y="427" width="3" height="1" fill="#000"/><rect x="49" y="427" width="1" height="1" fill="#000"/><rect x="51" y="427" width="1" height="1" fill="#000"/><rect x="55" y="427" width="1" height="1" fill="#000"/><rect x="40" y="428" width="3" height="1" fill="#000"/><rect x="49" y="428" width="1" height="1" fill="#000"/><rect x="52" y="428" width="1" height="1" fill="#000"/><rect x="54" y="428" width="1" height="1" fill="#000"/><rect x="40" y="429" width="3" height="1" fill="#000"/><rect x="47" y="429" width="2" height="1" fill="#000"/><rect x="53" y="429" width="1" height="1" fill="#000"/><rect x="40" y="430" width="3" height="1" fill="#000"/><rect x="46" y="430" width="1" height="1" fill="#000"/><rect x="52" y="430" width="1" height="1" fill="#000"/><rect x="54" y="430" width="1" height="1" fill="#000"/><rect x="40" y="431" width="3" height="1" fill="#000"/><rect x="45" y="431" width="1" height="1" fill="#000"/><rect x="51" y="431" width="1" height="1" fill="#000"/><rect x="55" y="431" width="1" height="1" fill="#000"/><rect x="40" y="432" width="3" height="1" fill="#000"/><rect x="45" y="432" width="1" height="1" fill="#000"/><rect x="51" y="432" width="1" height="1" fill="#000"/><rect x="55" y="432" width="1" height="1" fill="#000"/><rect x="41" y="433" width="1" height="1" fill="#000"/><rect x="45" y="433" width="5" height="1" fill="#000"/><rect x="51" y="433" width="1" height="1" fill="#000"/><rect x="55" y="433" width="1" height="1" fill="#000"/>
<rect x="69" y="415" width="5" height="1" fill="#909090"/><rect x="68" y="416" width="1" height="1" fill="#909090"/><rect x="74" y="416" width="1" height="1" fill="#909090"/><rect x="67" y="417" width="1" height="1" fill="#909090"/><rect x="75" y="417" width="1" height="1" fill="#909090"/><rect x="77" y="417" width="3" height="1" fill="#909090"/><rect x="81" y="417" width="1" height="1" fill="#909090"/><rect x="83" y="417" width="1" height="1" fill="#909090"/><rect x="85" y="417" width="3" height="1" fill="#909090"/><rect x="67" y="418" width="1" height="1" fill="#909090"/><rect x="75" y="418" width="1" height="1" fill="#909090"/><rect x="77" y="418" width="1" height="1" fill="#909090"/><rect x="79" y="418" width="1" height="1" fill="#909090"/><rect x="81" y="418" width="1" height="1" fill="#909090"/><rect x="83" y="418" width="1" height="1" fill="#909090"/><rect x="86" y="418" width="1" height="1" fill="#909090"/><rect x="67" y="419" width="1" height="1" fill="#909090"/><rect x="75" y="419" width="1" height="1" fill="#909090"/><rect x="77" y="419" width="1" height="1" fill="#909090"/><rect x="79" y="419" width="1" height="1" fill="#909090"/><rect x="81" y="419" width="1" height="1" fill="#909090"/><rect x="83" y="419" width="1" height="1" fill="#909090"/><rect x="86" y="419" width="1" height="1" fill="#909090"/><rect x="67" y="420" width="1" height="1" fill="#909090"/><rect x="75" y="420" width="1" height="1" fill="#909090"/><rect x="77" y="420" width="1" height="1" fill="#909090"/><rect x="79" y="420" width="1" height="1" fill="#909090"/><rect x="81" y="420" width="1" height="1" fill="#909090"/><rect x="83" y="420" width="1" height="1" fill="#909090"/><rect x="86" y="420" width="1" height="1" fill="#909090"/><rect x="67" y="421" width="1" height="1" fill="#909090"/><rect x="75" y="421" width="1" height="1" fill="#909090"/><rect x="77" y="421" width="3" height="1" fill="#909090"/><rect x="81" y="421" width="3" height="1" fill="#909090"/><rect x="86" y="421" width="1" height="1" fill="#909090"/><rect x="68" y="422" width="1" height="1" fill="#909090"/><rect x="74" y="422" width="1" height="1" fill="#909090"/><rect x="69" y="423" width="5" height="1" fill="#909090"/><rect x="71" y="424" width="1" height="1" fill="#909090"/><rect x="70" y="425" width="3" height="1" fill="#909090"/><rect x="77" y="425" width="3" height="1" fill="#909090"/><rect x="81" y="425" width="1" height="1" fill="#909090"/><rect x="85" y="425" width="1" height="1" fill="#909090"/><rect x="70" y="426" width="1" height="1" fill="#909090"/><rect x="72" y="426" width="1" height="1" fill="#909090"/><rect x="76" y="426" width="1" height="1" fill="#909090"/><rect x="80" y="426" width="2" height="1" fill="#909090"/><rect x="85" y="426" width="1" height="1" fill="#909090"/><rect x="70" y="427" width="1" height="1" fill="#909090"/><rect x="72" y="427" width="1" height="1" fill="#909090"/><rect x="80" y="427" width="1" height="1" fill="#909090"/><rect x="82" y="427" width="1" height="1" fill="#909090"/><rect x="84" y="427" width="1" height="1" fill="#909090"/><rect x="70" y="428" width="1" height="1" fill="#909090"/><rect x="72" y="428" width="1" height="1" fill="#909090"/><rect x="79" y="428" width="1" height="1" fill="#909090"/><rect x="82" y="428" width="1" height="1" fill="#909090"/><rect x="84" y="428" width="1" height="1" fill="#909090"/><rect x="70" y="429" width="1" height="1" fill="#909090"/><rect x="72" y="429" width="1" height="1" fill="#909090"/><rect x="78" y="429" width="1" height="1" fill="#909090"/><rect x="83" y="429" width="1" height="1" fill="#909090"/><rect x="70" y="430" width="1" height="1" fill="#909090"/><rect x="72" y="430" width="1" height="1" fill="#909090"/><rect x="77" y="430" width="1" height="1" fill="#909090"/><rect x="82" y="430" width="1" height="1" fill="#909090"/><rect x="84" y="430" width="1" height="1" fill="#909090"/><rect x="70" y="431" width="1" height="1" fill="#909090"/><rect x="72" y="431" width="1" height="1" fill="#909090"/><rect x="76" y="431" width="1" height="1" fill="#909090"/><rect x="82" y="431" width="1" height="1" fill="#909090"/><rect x="84" y="431" width="1" height="1" fill="#909090"/><rect x="70" y="432" width="3" height="1" fill="#909090"/><rect x="76" y="432" width="1" height="1" fill="#909090"/><rect x="81" y="432" width="1" height="1" fill="#909090"/><rect x="85" y="432" width="1" height="1" fill="#909090"/><rect x="71" y="433" width="1" height="1" fill="#909090"/><rect x="76" y="433" width="6" height="1" fill="#909090"/><rect x="85" y="433" width="1" height="1" fill="#909090"/>
<rect x="99" y="415" width="5" height="1" fill="#909090"/><rect x="98" y="416" width="1" height="1" fill="#909090"/><rect x="104" y="416" width="1" height="1" fill="#909090"/><rect x="97" y="417" width="1" height="1" fill="#909090"/><rect x="105" y="417" width="1" height="1" fill="#909090"/><rect x="107" y="417" width="3" height="1" fill="#909090"/><rect x="111" y="417" width="1" height="1" fill="#909090"/><rect x="113" y="417" width="1" height="1" fill="#909090"/><rect x="115" y="417" width="3" height="1" fill="#909090"/><rect x="97" y="418" width="1" height="1" fill="#909090"/><rect x="105" y="418" width="1" height="1" fill="#909090"/><rect x="107" y="418" width="1" height="1" fill="#909090"/><rect x="109" y="418" width="1" height="1" fill="#909090"/><rect x="111" y="418" width="1" height="1" fill="#909090"/><rect x="113" y="418" width="1" height="1" fill="#909090"/><rect x="116" y="418" width="1" height="1" fill="#909090"/><rect x="97" y="419" width="1" height="1" fill="#909090"/><rect x="105" y="419" width="1" height="1" fill="#909090"/><rect x="107" y="419" width="1" height="1" fill="#909090"/><rect x="109" y="419" width="1" height="1" fill="#909090"/><rect x="111" y="419" width="1" height="1" fill="#909090"/><rect x="113" y="419" width="1" height="1" fill="#909090"/><rect x="116" y="419" width="1" height="1" fill="#909090"/><rect x="97" y="420" width="1" height="1" fill="#909090"/><rect x="105" y="420" width="1" height="1" fill="#909090"/><rect x="107" y="420" width="1" height="1" fill="#909090"/><rect x="109" y="420" width="1" height="1" fill="#909090"/><rect x="111" y="420" width="1" height="1" fill="#909090"/><rect x="113" y="420" width="1" height="1" fill="#909090"/><rect x="116" y="420" width="1" height="1" fill="#909090"/><rect x="97" y="421" width="1" height="1" fill="#909090"/><rect x="105" y="421" width="1" height="1" fill="#909090"/><rect x="107" y="421" width="3" height="1" fill="#909090"/><rect x="111" y="421" width="3" height="1" fill="#909090"/><rect x="116" y="421" width="1" height="1" fill="#909090"/><rect x="98" y="422" width="1" height="1" fill="#909090"/><rect x="104" y="422" width="1" height="1" fill="#909090"/><rect x="99" y="423" width="5" height="1" fill="#909090"/><rect x="101" y="424" width="1" height="1" fill="#909090"/><rect x="100" y="425" width="3" height="1" fill="#909090"/><rect x="104" y="425" width="3" height="1" fill="#909090"/><rect x="108" y="425" width="1" height="1" fill="#909090"/><rect x="110" y="425" width="1" height="1" fill="#909090"/><rect x="112" y="425" width="1" height="1" fill="#909090"/><rect x="115" y="425" width="1" height="1" fill="#909090"/><rect x="100" y="426" width="1" height="1" fill="#909090"/><rect x="102" y="426" width="1" height="1" fill="#909090"/><rect x="104" y="426" width="1" height="1" fill="#909090"/><rect x="108" y="426" width="1" height="1" fill="#909090"/><rect x="110" y="426" width="1" height="1" fill="#909090"/><rect x="112" y="426" width="1" height="1" fill="#909090"/><rect x="115" y="426" width="1" height="1" fill="#909090"/><rect x="100" y="427" width="1" height="1" fill="#909090"/><rect x="102" y="427" width="1" height="1" fill="#909090"/><rect x="104" y="427" width="2" height="1" fill="#909090"/><rect x="108" y="427" width="1" height="1" fill="#909090"/><rect x="110" y="427" width="1" height="1" fill="#909090"/><rect x="112" y="427" width="1" height="1" fill="#909090"/><rect x="115" y="427" width="1" height="1" fill="#909090"/><rect x="100" y="428" width="1" height="1" fill="#909090"/><rect x="102" y="428" width="1" height="1" fill="#909090"/><rect x="104" y="428" width="1" height="1" fill="#909090"/><rect x="108" y="428" width="1" height="1" fill="#909090"/><rect x="110" y="428" width="1" height="1" fill="#909090"/><rect x="112" y="428" width="1" height="1" fill="#909090"/><rect x="115" y="428" width="1" height="1" fill="#909090"/><rect x="100" y="429" width="1" height="1" fill="#909090"/><rect x="102" y="429" width="1" height="1" fill="#909090"/><rect x="104" y="429" width="1" height="1" fill="#909090"/><rect x="108" y="429" width="1" height="1" fill="#909090"/><rect x="110" y="429" width="1" height="1" fill="#909090"/><rect x="112" y="429" width="1" height="1" fill="#909090"/><rect x="115" y="429" width="1" height="1" fill="#909090"/><rect x="100" y="430" width="1" height="1" fill="#909090"/><rect x="102" y="430" width="1" height="1" fill="#909090"/><rect x="104" y="430" width="1" height="1" fill="#909090"/><rect x="108" y="430" width="3" height="1" fill="#909090"/><rect x="112" y="430" width="2" height="1" fill="#909090"/><rect x="115" y="430" width="2" height="1" fill="#909090"/><rect x="100" y="431" width="1" height="1" fill="#909090"/><rect x="102" y="431" width="1" height="1" fill="#909090"/><rect x="100" y="432" width="3" height="1" fill="#909090"/><rect x="101" y="433" width="1" height="1" fill="#909090"/>
<rect x="140" y="414" width="21" height="1" fill="#000"/><rect x="140" y="415" width="1" height="1" fill="#000"/><rect x="141" y="415" width="1" height="1" fill="#fff"/><rect x="142" y="415" width="1" height="1" fill="#000"/><rect x="143" y="415" width="14" height="1" fill="#c0c0c0"/><rect x="157" y="415" width="1" height="1" fill="#000"/><rect x="158" y="415" width="2" height="1" fill="#fff"/><rect x="160" y="415" width="1" height="1" fill="#000"/><rect x="140" y="416" width="1" height="1" fill="#000"/><rect x="141" y="416" width="1" height="1" fill="#fff"/><rect x="142" y="416" width="1" height="1" fill="#000"/><rect x="143" y="416" width="14" height="1" fill="#c0c0c0"/><rect x="157" y="416" width="1" height="1" fill="#000"/><rect x="158" y="416" width="2" height="1" fill="#fff"/><rect x="160" y="416" width="1" height="1" fill="#000"/><rect x="140" y="417" width="21" height="1" fill="#000"/><rect x="140" y="418" width="1" height="1" fill="#000"/><rect x="141" y="418" width="19" height="1" fill="#fff"/><rect x="160" y="418" width="1" height="1" fill="#000"/><rect x="140" y="419" width="1" height="1" fill="#000"/><rect x="141" y="419" width="3" height="1" fill="#fff"/><rect x="144" y="419" width="15" height="1" fill="#000"/><rect x="159" y="419" width="1" height="1" fill="#fff"/><rect x="160" y="419" width="1" height="1" fill="#000"/><rect x="140" y="420" width="1" height="1" fill="#000"/><rect x="141" y="420" width="3" height="1" fill="#fff"/><rect x="144" y="420" width="1" height="1" fill="#000"/><rect x="145" y="420" width="13" height="1" fill="#fff"/><rect x="158" y="420" width="1" height="1" fill="#000"/><rect x="159" y="420" width="1" height="1" fill="#fff"/><rect x="160" y="420" width="1" height="1" fill="#000"/><rect x="140" y="421" width="1" height="1" fill="#000"/><rect x="141" y="421" width="3" height="1" fill="#fff"/><rect x="144" y="421" width="1" height="1" fill="#000"/><rect x="145" y="421" width="13" height="1" fill="#fff"/><rect x="158" y="421" width="1" height="1" fill="#000"/><rect x="159" y="421" width="1" height="1" fill="#fff"/><rect x="160" y="421" width="1" height="1" fill="#000"/><rect x="140" y="422" width="1" height="1" fill="#000"/><rect x="141" y="422" width="3" height="1" fill="#fff"/><rect x="144" y="422" width="15" height="1" fill="#000"/><rect x="159" y="422" width="1" height="1" fill="#fff"/><rect x="160" y="422" width="1" height="1" fill="#000"/><rect x="140" y="423" width="1" height="1" fill="#000"/><rect x="141" y="423" width="19" height="1" fill="#fff"/><rect x="160" y="423" width="1" height="1" fill="#000"/><rect x="140" y="424" width="1" height="1" fill="#000"/><rect x="141" y="424" width="9" height="1" fill="#fff"/><rect x="150" y="424" width="9" height="1" fill="#000"/><rect x="159" y="424" width="1" height="1" fill="#fff"/><rect x="160" y="424" width="1" height="1" fill="#000"/><rect x="140" y="425" width="1" height="1" fill="#000"/><rect x="141" y="425" width="2" height="1" fill="#fff"/><rect x="143" y="425" width="1" height="1" fill="#000"/><rect x="144" y="425" width="2" height="1" fill="#fff"/><rect x="146" y="425" width="1" height="1" fill="#000"/><rect x="147" y="425" width="1" height="1" fill="#fff"/><rect x="148" y="425" width="1" height="1" fill="#000"/><rect x="149" y="425" width="1" height="1" fill="#fff"/><rect x="150" y="425" width="1" height="1" fill="#000"/><rect x="151" y="425" width="7" height="1" fill="#fff"/><rect x="158" y="425" width="1" height="1" fill="#000"/><rect x="159" y="425" width="1" height="1" fill="#fff"/><rect x="160" y="425" width="1" height="1" fill="#000"/><rect x="140" y="426" width="1" height="1" fill="#000"/><rect x="141" y="426" width="3" height="1" fill="#fff"/><rect x="144" y="426" width="1" height="1" fill="#000"/><rect x="145" y="426" width="1" height="1" fill="#fff"/><rect x="146" y="426" width="1" height="1" fill="#000"/><rect x="147" y="426" width="3" height="1" fill="#fff"/><rect x="150" y="426" width="1" height="1" fill="#000"/><rect x="151" y="426" width="7" height="1" fill="#fff"/><rect x="158" y="426" width="1" height="1" fill="#000"/><rect x="159" y="426" width="1" height="1" fill="#fff"/><rect x="160" y="426" width="1" height="1" fill="#000"/><rect x="140" y="427" width="1" height="1" fill="#000"/><rect x="141" y="427" width="9" height="1" fill="#fff"/><rect x="150" y="427" width="9" height="1" fill="#000"/><rect x="159" y="427" width="1" height="1" fill="#fff"/><rect x="160" y="427" width="1" height="1" fill="#000"/><rect x="140" y="428" width="1" height="1" fill="#000"/><rect x="141" y="428" width="19" height="1" fill="#fff"/><rect x="160" y="428" width="1" height="1" fill="#000"/><rect x="140" y="429" width="1" height="1" fill="#000"/><rect x="141" y="429" width="9" height="1" fill="#fff"/><rect x="150" y="429" width="9" height="1" fill="#000"/><rect x="159" y="429" width="1" height="1" fill="#fff"/><rect x="160" y="429" width="1" height="1" fill="#000"/><rect x="140" y="430" width="1" height="1" fill="#000"/><rect x="141" y="430" width="3" height="1" fill="#fff"/><rect x="144" y="430" width="1" height="1" fill="#000"/><rect x="145" y="430" width="2" height="1" fill="#fff"/><rect x="147" y="430" width="1" height="1" fill="#000"/><rect x="148" y="430" width="2" height="1" fill="#fff"/><rect x="150" y="430" width="1" height="1" fill="#000"/><rect x="151" y="430" width="7" height="1" fill="#fff"/><rect x="158" y="430" width="1" height="1" fill="#000"/><rect x="159" y="430" width="1" height="1" fill="#fff"/><rect x="160" y="430" width="1" height="1" fill="#000"/><rect x="140" y="431" width="1" height="1" fill="#000"/><rect x="141" y="431" width="2" height="1" fill="#fff"/><rect x="143" y="431" width="1" height="1" fill="#000"/><rect x="144" y="431" width="1" height="1" fill="#fff"/><rect x="145" y="431" width="2" height="1" fill="#000"/><rect x="147" y="431" width="3" height="1" fill="#fff"/><rect x="150" y="431" width="1" height="1" fill="#000"/><rect x="151" y="431" width="7" height="1" fill="#fff"/><rect x="158" y="431" width="1" height="1" fill="#000"/><rect x="159" y="431" width="1" height="1" fill="#fff"/><rect x="160" y="431" width="1" height="1" fill="#000"/><rect x="140" y="432" width="1" height="1" fill="#000"/><rect x="141" y="432" width="9" height="1" fill="#fff"/><rect x="150" y="432" width="9" height="1" fill="#000"/><rect x="159" y="432" width="1" height="1" fill="#fff"/><rect x="160" y="432" width="1" height="1" fill="#000"/><rect x="140" y="433" width="1" height="1" fill="#000"/><rect x="141" y="433" width="19" height="1" fill="#fff"/><rect x="160" y="433" width="1" height="1" fill="#000"/><rect x="140" y="434" width="21" height="1" fill="#000"/>
<text x="175" y="430">Plot Top:</text>
<rect x="225" y="415" width="44" height="20" fill="#000"/><rect x="226" y="416" width="42" height="18" fill="#fff"/>
<text x="228" y="429">180.0</text>
<rect x="270" y="414" width="1" height="21" fill="url(#bg)"/>
<rect x="271" y="415" width="12" height="10" fill="#000"/><rect x="271" y="415" width="11" height="9" fill="#fff"/><rect x="272" y="416" width="10" height="8" fill="url(#dk)"/><rect x="273" y="416" width="8" height="7" fill="url(#bg)"/>
<rect x="271" y="425" width="12" height="10" fill="#000"/><rect x="271" y="425" width="11" height="9" fill="#fff"/><rect x="272" y="426" width="10" height="8" fill="url(#dk)"/><rect x="273" y="426" width="8" height="7" fill="url(#bg)"/>
<rect x="276" y="419" width="1" height="1" fill="#000"/><rect x="275" y="420" width="3" height="1" fill="#000"/>
<rect x="275" y="429" width="3" height="1" fill="#000"/><rect x="276" y="430" width="1" height="1" fill="#000"/>
<rect x="1" y="439" width="1168" height="1" fill="url(#chk)"/>
<rect x="1" y="440" width="1169" height="1" fill="#000"/>
<rect x="1169" y="416" width="2" height="112" fill="#000"/>
<rect x="1170" y="417" width="1" height="110" fill="#fff"/>
<text x="531" y="454" textLength="210" lengthAdjust="spacing">Complex Transfer Function (Right/Left)</text>
<rect x="59" y="459" width="1108" height="1" fill="url(#dk)"/>
<rect x="59" y="459" width="2" height="333" fill="url(#strip)"/>
<rect x="1167" y="460" width="2" height="333" fill="url(#chk)"/>
<rect x="61" y="791" width="1108" height="2" fill="url(#chk)"/>
<rect x="61" y="460" width="1106" height="331" fill="#00ffff"/>
<rect x="61" y="501" width="1106" height="1" fill="#c8c8c8"/>
<line x1="61" y1="501.5" x2="1167" y2="501.5" stroke="#989898" stroke-width="1" stroke-dasharray="1 1" stroke-dashoffset="1"/>
<rect x="61" y="542" width="1106" height="1" fill="#c8c8c8"/>
<rect x="61" y="584" width="1106" height="1" fill="#c8c8c8"/>
<rect x="61" y="625" width="1106" height="1" fill="#c8c8c8"/>
<line x1="61" y1="625.5" x2="1167" y2="625.5" stroke="#989898" stroke-width="1" stroke-dasharray="1 1" stroke-dashoffset="1"/>
<rect x="61" y="666" width="1106" height="1" fill="#c8c8c8"/>
<rect x="61" y="708" width="1106" height="1" fill="#c8c8c8"/>
<rect x="61" y="749" width="1106" height="1" fill="#c8c8c8"/>
<line x1="61" y1="749.5" x2="1167" y2="749.5" stroke="#989898" stroke-width="1" stroke-dasharray="1 1" stroke-dashoffset="1"/>
<rect x="138" y="460" width="1" height="331" fill="#c8c8c8"/>
<line x1="138.5" y1="460" x2="138.5" y2="791" stroke="#989898" stroke-width="1" stroke-dasharray="1 1" stroke-dashoffset="1"/>
<rect x="197" y="460" width="1" height="331" fill="#c8c8c8"/>
<rect x="239" y="460" width="1" height="331" fill="#c8c8c8"/>
<rect x="271" y="460" width="1" height="331" fill="#c8c8c8"/>
<rect x="298" y="460" width="1" height="331" fill="#c8c8c8"/>
<line x1="298.5" y1="460" x2="298.5" y2="791" stroke="#989898" stroke-width="1" stroke-dasharray="1 1" stroke-dashoffset="1"/>
<rect x="320" y="460" width="1" height="331" fill="#c8c8c8"/>
<line x1="320.5" y1="460" x2="320.5" y2="791" stroke="#989898" stroke-width="1" stroke-dasharray="1 1" stroke-dashoffset="1"/>
<rect x="339" y="460" width="1" height="331" fill="#c8c8c8"/>
<rect x="357" y="460" width="1" height="331" fill="#c8c8c8"/>
<rect x="372" y="460" width="1" height="331" fill="#c8c8c8"/>
<line x1="372.5" y1="460" x2="372.5" y2="791" stroke="#989898" stroke-width="1" stroke-dasharray="1 1" stroke-dashoffset="1"/>
<rect x="473" y="460" width="1" height="331" fill="#c8c8c8"/>
<rect x="531" y="460" width="1" height="331" fill="#c8c8c8"/>
<rect x="573" y="460" width="1" height="331" fill="#c8c8c8"/>
<rect x="606" y="460" width="1" height="331" fill="#c8c8c8"/>
<line x1="606.5" y1="460" x2="606.5" y2="791" stroke="#989898" stroke-width="1" stroke-dasharray="1 1" stroke-dashoffset="1"/>
<rect x="632" y="460" width="1" height="331" fill="#c8c8c8"/>
<line x1="632.5" y1="460" x2="632.5" y2="791" stroke="#989898" stroke-width="1" stroke-dasharray="1 1" stroke-dashoffset="1"/>
<rect x="655" y="460" width="1" height="331" fill="#c8c8c8"/>
<rect x="674" y="460" width="1" height="331" fill="#c8c8c8"/>
<line x1="674.5" y1="460" x2="674.5" y2="791" stroke="#989898" stroke-width="1" stroke-dasharray="1 1" stroke-dashoffset="1"/>
<rect x="691" y="460" width="1" height="331" fill="#c8c8c8"/>
<rect x="706" y="460" width="1" height="331" fill="#c8c8c8"/>
<line x1="706.5" y1="460" x2="706.5" y2="791" stroke="#989898" stroke-width="1" stroke-dasharray="1 1" stroke-dashoffset="1"/>
<rect x="807" y="460" width="1" height="331" fill="#c8c8c8"/>
<rect x="866" y="460" width="1" height="331" fill="#c8c8c8"/>
<line x1="866.5" y1="460" x2="866.5" y2="791" stroke="#989898" stroke-width="1" stroke-dasharray="1 1" stroke-dashoffset="1"/>
<rect x="908" y="460" width="1" height="331" fill="#c8c8c8"/>
<line x1="908.5" y1="460" x2="908.5" y2="791" stroke="#989898" stroke-width="1" stroke-dasharray="1 1" stroke-dashoffset="1"/>
<rect x="941" y="460" width="1" height="331" fill="#c8c8c8"/>
<line x1="941.5" y1="460" x2="941.5" y2="791" stroke="#989898" stroke-width="1" stroke-dasharray="1 1" stroke-dashoffset="1"/>
<rect x="967" y="460" width="1" height="331" fill="#c8c8c8"/>
<rect x="989" y="460" width="1" height="331" fill="#c8c8c8"/>
<rect x="1008" y="460" width="1" height="331" fill="#c8c8c8"/>
<line x1="1008.5" y1="460" x2="1008.5" y2="791" stroke="#989898" stroke-width="1" stroke-dasharray="1 1" stroke-dashoffset="1"/>
<rect x="1025" y="460" width="1" height="331" fill="#c8c8c8"/>
<rect x="1041" y="460" width="1" height="331" fill="#c8c8c8"/>
<rect x="1141" y="460" width="1" height="331" fill="#c8c8c8"/>
<rect x="138" y="791" width="1" height="3" fill="#000"/>
<text x="137.5" y="806" text-anchor="middle">20</text>
<rect x="197" y="791" width="1" height="3" fill="#000"/>
<text x="196.5" y="806" text-anchor="middle">30</text>
<rect x="239" y="791" width="1" height="3" fill="#000"/>
<text x="238.5" y="806" text-anchor="middle">40</text>
<rect x="271" y="791" width="1" height="3" fill="#000"/>
<rect x="298" y="791" width="1" height="3" fill="#000"/>
<text x="297.5" y="806" text-anchor="middle">60</text>
<rect x="320" y="791" width="1" height="3" fill="#000"/>
<rect x="339" y="791" width="1" height="3" fill="#000"/>
<text x="338.5" y="806" text-anchor="middle">80</text>
<rect x="357" y="791" width="1" height="3" fill="#000"/>
<rect x="372" y="791" width="1" height="3" fill="#000"/>
<text x="371.5" y="806" text-anchor="middle">100</text>
<rect x="473" y="791" width="1" height="3" fill="#000"/>
<text x="472.5" y="806" text-anchor="middle">200</text>
<rect x="531" y="791" width="1" height="3" fill="#000"/>
<text x="530.5" y="806" text-anchor="middle">300</text>
<rect x="573" y="791" width="1" height="3" fill="#000"/>
<text x="572.5" y="806" text-anchor="middle">400</text>
<rect x="606" y="791" width="1" height="3" fill="#000"/>
<rect x="632" y="791" width="1" height="3" fill="#000"/>
<text x="631.5" y="806" text-anchor="middle">600</text>
<rect x="655" y="791" width="1" height="3" fill="#000"/>
<rect x="674" y="791" width="1" height="3" fill="#000"/>
<text x="673.5" y="806" text-anchor="middle">800</text>
<rect x="691" y="791" width="1" height="3" fill="#000"/>
<rect x="706" y="791" width="1" height="3" fill="#000"/>
<text x="705.5" y="806" text-anchor="middle">1.0k</text>
<rect x="807" y="791" width="1" height="3" fill="#000"/>
<text x="806.5" y="806" text-anchor="middle">2.0k</text>
<rect x="866" y="791" width="1" height="3" fill="#000"/>
<text x="865.5" y="806" text-anchor="middle">3.0k</text>
<rect x="908" y="791" width="1" height="3" fill="#000"/>
<text x="907.5" y="806" text-anchor="middle">4.0k</text>
<rect x="941" y="791" width="1" height="3" fill="#000"/>
<rect x="967" y="791" width="1" height="3" fill="#000"/>
<text x="966.5" y="806" text-anchor="middle">6.0k</text>
<rect x="989" y="791" width="1" height="3" fill="#000"/>
<rect x="1008" y="791" width="1" height="3" fill="#000"/>
<text x="1007.5" y="806" text-anchor="middle">8.0k</text>
<rect x="1025" y="791" width="1" height="3" fill="#000"/>
<rect x="1041" y="791" width="1" height="3" fill="#000"/>
<text x="1040.5" y="806" text-anchor="middle">10.0k</text>
<rect x="1141" y="791" width="1" height="3" fill="#000"/>
<text x="1140.5" y="806" text-anchor="middle">20.0k</text>
<rect x="59" y="460" width="2" height="1" fill="#000"/>
<text x="55" y="465" text-anchor="end">180.0</text>
<rect x="59" y="501" width="2" height="1" fill="#000"/>
<text x="55" y="506" text-anchor="end">135.0</text>
<rect x="59" y="542" width="2" height="1" fill="#000"/>
<text x="55" y="547" text-anchor="end">90.0</text>
<rect x="59" y="584" width="2" height="1" fill="#000"/>
<text x="55" y="589" text-anchor="end">45.0</text>
<rect x="59" y="625" width="2" height="1" fill="#000"/>
<text x="55" y="630" text-anchor="end">0.0</text>
<rect x="59" y="666" width="2" height="1" fill="#000"/>
<text x="55" y="671" text-anchor="end">-45.0</text>
<rect x="59" y="708" width="2" height="1" fill="#000"/>
<text x="55" y="713" text-anchor="end">-90.0</text>
<rect x="59" y="749" width="2" height="1" fill="#000"/>
<text x="55" y="754" text-anchor="end">-135.0</text>
<rect x="59" y="790" width="2" height="1" fill="#000"/>
<text x="55" y="795" text-anchor="end">-180.0</text>
<text x="595" y="818">Frequency (Hz)</text>
<text transform="translate(18,679) rotate(-90)" style="font-size:13px">Phase (degrees)</text>
<polyline fill="none" stroke="#000" stroke-width="1" shape-rendering="crispEdges" points="61.5,789.5 78.5,789.5 119.5,462.5 139.5,462.5 140.5,461.5 334.5,461.5 345.0,790.5 416.5,790.5 422.5,461.5 428.5,461.5 434.5,790.5 440.5,790.5 445.5,461.5 450.5,461.5 455.5,790.5 460.5,790.5 464.5,461.5 531.5,461.5 532.5,462.5 572.5,462.5 573.5,463.5 592.5,463.5 593.5,464.5 607.5,464.5 608.5,465.5 620.5,465.5 660.5,469.2 700.5,476.0 740.5,484.9 780.5,495.0 807.5,502.8 866.5,523.0 909.0,537.5 941.0,548.2 968.2,556.8 990.5,562.5 1009.5,567.7 1026.0,572.0 1042.0,575.9 1060.5,578.7 1064.3,578.7 1064.9,580.0 1068.2,580.0 1069.0,578.7 1071.0,581.0 1072.0,579.7 1073.1,580.7 1075.4,581.0 1076.1,582.0 1077.1,581.0 1078.7,581.8 1080.2,581.2 1081.2,583.0 1082.0,582.0 1082.8,578.7 1083.3,581.5 1084.6,583.0 1086.1,581.8 1087.9,580.7 1090.2,583.0 1091.2,582.0 1092.8,584.1 1094.3,583.0 1096.4,583.0 1097.1,584.3 1098.9,581.0 1101.0,583.8 1103.0,586.1 1104.0,585.9 1105.1,583.0 1107.6,581.8 1108.9,586.1 1109.9,583.8 1112.2,583.8 1114.3,581.8 1115.8,586.1 1116.9,583.5 1117.9,584.6 1121.0,583.9 1125.9,577.8 1127.5,578.4 1129.2,591.0 1131.9,581.7 1133.0,587.1 1134.1,580.0 1136.3,583.3 1139.6,580.6 1141.8,587.7 1142.9,576.2 1144.0,588.8 1146.7,571.8 1148.4,580.6 1150.6,577.3 1153.3,578.9 1155.0,586.6 1156.9,563.6 1158.2,578.4 1159.1,566.9 1160.4,577.3 1161.0,604.7 1162.1,632.1 1163.0,552.6 1163.7,565.2 1164.6,577.3 1165.4,569.6 1166.1,568.5 1167.0,588.8"/>
<rect x="1122" y="462" width="43" height="24" fill="#000"/><rect x="1127" y="465" width="8" height="1" fill="#fff"/><rect x="1126" y="466" width="10" height="1" fill="#fff"/><rect x="1126" y="467" width="2" height="1" fill="#fff"/><rect x="1133" y="467" width="3" height="1" fill="#fff"/><rect x="1126" y="468" width="8" height="1" fill="#fff"/><rect x="1126" y="469" width="10" height="1" fill="#fff"/><rect x="1127" y="470" width="9" height="1" fill="#fff"/><rect x="1125" y="471" width="3" height="1" fill="#fff"/><rect x="1133" y="471" width="3" height="1" fill="#fff"/><rect x="1126" y="472" width="10" height="1" fill="#fff"/><rect x="1127" y="473" width="8" height="1" fill="#fff"/><rect x="1126" y="475" width="10" height="1" fill="#fff"/><rect x="1126" y="476" width="10" height="1" fill="#fff"/><rect x="1126" y="477" width="10" height="1" fill="#fff"/><rect x="1129" y="478" width="3" height="1" fill="#fff"/><rect x="1129" y="479" width="3" height="1" fill="#fff"/><rect x="1129" y="480" width="3" height="1" fill="#fff"/><rect x="1129" y="481" width="3" height="1" fill="#fff"/><rect x="1129" y="482" width="3" height="1" fill="#fff"/><rect x="1144" y="465" width="2" height="1" fill="#fff"/><rect x="1143" y="466" width="1" height="1" fill="#fff"/><rect x="1146" y="466" width="1" height="1" fill="#fff"/><rect x="1142" y="467" width="1" height="1" fill="#fff"/><rect x="1147" y="467" width="1" height="1" fill="#fff"/><rect x="1142" y="468" width="1" height="1" fill="#fff"/><rect x="1147" y="468" width="1" height="1" fill="#fff"/><rect x="1141" y="469" width="1" height="1" fill="#fff"/><rect x="1148" y="469" width="1" height="1" fill="#fff"/><rect x="1141" y="470" width="1" height="1" fill="#fff"/><rect x="1148" y="470" width="1" height="1" fill="#fff"/><rect x="1140" y="471" width="1" height="1" fill="#fff"/><rect x="1149" y="471" width="1" height="1" fill="#fff"/><rect x="1140" y="472" width="1" height="1" fill="#fff"/><rect x="1149" y="472" width="1" height="1" fill="#fff"/><rect x="1139" y="473" width="1" height="1" fill="#fff"/><rect x="1150" y="473" width="1" height="1" fill="#fff"/><rect x="1139" y="474" width="23" height="1" fill="#fff"/><rect x="1150" y="475" width="1" height="1" fill="#fff"/><rect x="1160" y="475" width="1" height="1" fill="#fff"/><rect x="1151" y="476" width="1" height="1" fill="#fff"/><rect x="1160" y="476" width="1" height="1" fill="#fff"/><rect x="1151" y="477" width="1" height="1" fill="#fff"/><rect x="1159" y="477" width="1" height="1" fill="#fff"/><rect x="1152" y="478" width="1" height="1" fill="#fff"/><rect x="1159" y="478" width="1" height="1" fill="#fff"/><rect x="1152" y="479" width="1" height="1" fill="#fff"/><rect x="1158" y="479" width="1" height="1" fill="#fff"/><rect x="1153" y="480" width="1" height="1" fill="#fff"/><rect x="1158" y="480" width="1" height="1" fill="#fff"/><rect x="1154" y="481" width="1" height="1" fill="#fff"/><rect x="1157" y="481" width="1" height="1" fill="#fff"/><rect x="1155" y="482" width="2" height="1" fill="#fff"/>
</svg></body></html>
